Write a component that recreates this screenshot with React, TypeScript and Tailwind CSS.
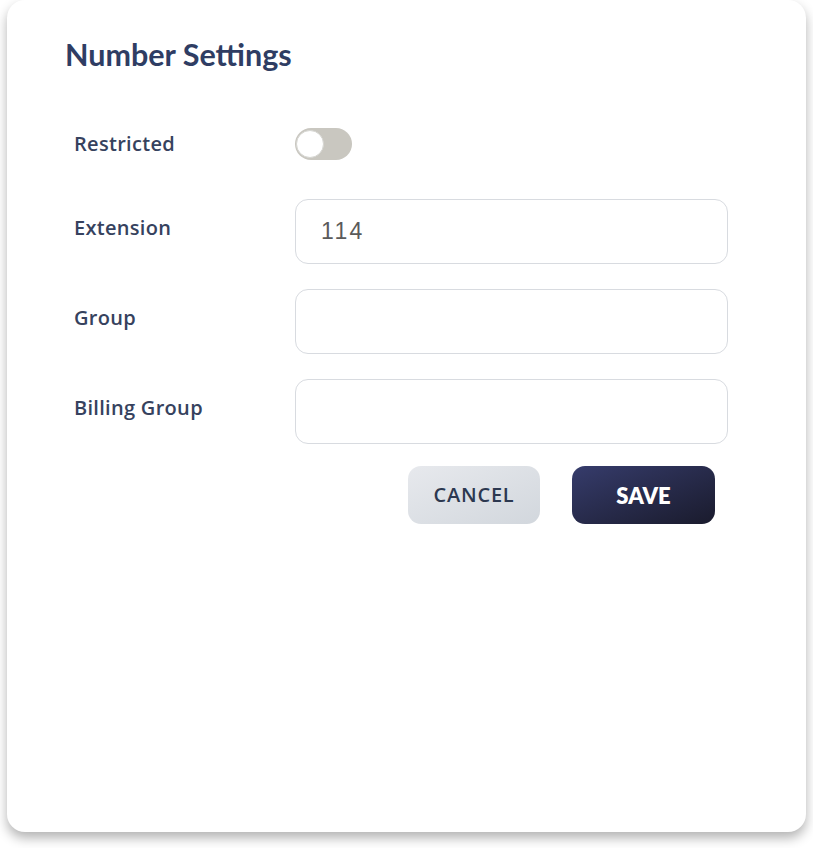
import { useState } from 'react';

const labelFont = { fontFamily: '"Open Sans", "Noto Sans", sans-serif' };

function Toggle() {
  const [on, setOn] = useState(false);
  return (
    <button
      onClick={() => setOn(!on)}
      className={`relative h-[32px] w-[57px] rounded-full ${on ? 'bg-[#2f3563]' : 'bg-[#c9c7c0]'}`}
    >
      <span
        className={`absolute top-[2px] h-[28px] w-[28px] rounded-full border border-[#d6d6d2] bg-white ${on ? 'left-[28px]' : 'left-[1px]'}`}
      />
    </button>
  );
}

function Field({ label, value }: { label: string; value?: string }) {
  return (
    <div className="flex items-start">
      <label
        className="w-[221px] pt-[15px] text-[20px] leading-[28px] font-semibold tracking-[0.015em] text-[#36425e]"
        style={labelFont}
      >
        {label}
      </label>
      <input
        defaultValue={value}
        className="h-[65px] w-[433px] rounded-[13px] border border-[#d8dbe0] bg-white px-[25px] text-[23px] tracking-[0.1em] text-[#5a5a5a] outline-none"
        style={{ fontFamily: '"Liberation Sans", Arial, sans-serif' }}
      />
    </div>
  );
}

export default function App() {
  return (
    <div className="min-h-screen bg-white px-[7px] pb-[16px]">
      <div className="h-[832px] rounded-[18px] bg-white shadow-[0_6px_12px_rgba(0,0,0,0.3)]">
        <div className="pl-[58px] pt-[36px]">
          <h1
            className="text-[30.5px] leading-[36px] font-bold text-[#2f3d63]"
            style={{ fontFamily: 'Lato, "Open Sans", sans-serif' }}
          >
            Number Settings
          </h1>
        </div>

        <div className="mt-[56px] flex flex-col pl-[67px]">
          <div className="flex items-center">
            <span
              className="w-[221px] text-[20px] leading-[28px] font-semibold tracking-[0.015em] text-[#36425e]"
              style={labelFont}
            >
              Restricted
            </span>
            <Toggle />
          </div>

          <div className="mt-[39px] flex flex-col gap-[25px]">
            <Field label="Extension" value="114" />
            <Field label="Group" />
            <Field label="Billing Group" />
          </div>

          <div className="mt-[22px] flex gap-[32px] pl-[334px]">
            <button
              className="h-[58px] w-[132px] rounded-[13px] bg-gradient-to-br from-[#e7e9ed] to-[#d2d7dd] text-[20px] font-semibold tracking-[0.04em] text-[#2c3850]"
              style={labelFont}
            >
              CANCEL
            </button>
            <button
              className="h-[58px] w-[143px] rounded-[13px] bg-gradient-to-br from-[#363c6c] to-[#1a1b2d] text-[22px] font-extrabold text-white"
              style={{ fontFamily: 'Lato, "Open Sans", sans-serif' }}
            >
              SAVE
            </button>
          </div>
        </div>
      </div>
    </div>
  );
}
